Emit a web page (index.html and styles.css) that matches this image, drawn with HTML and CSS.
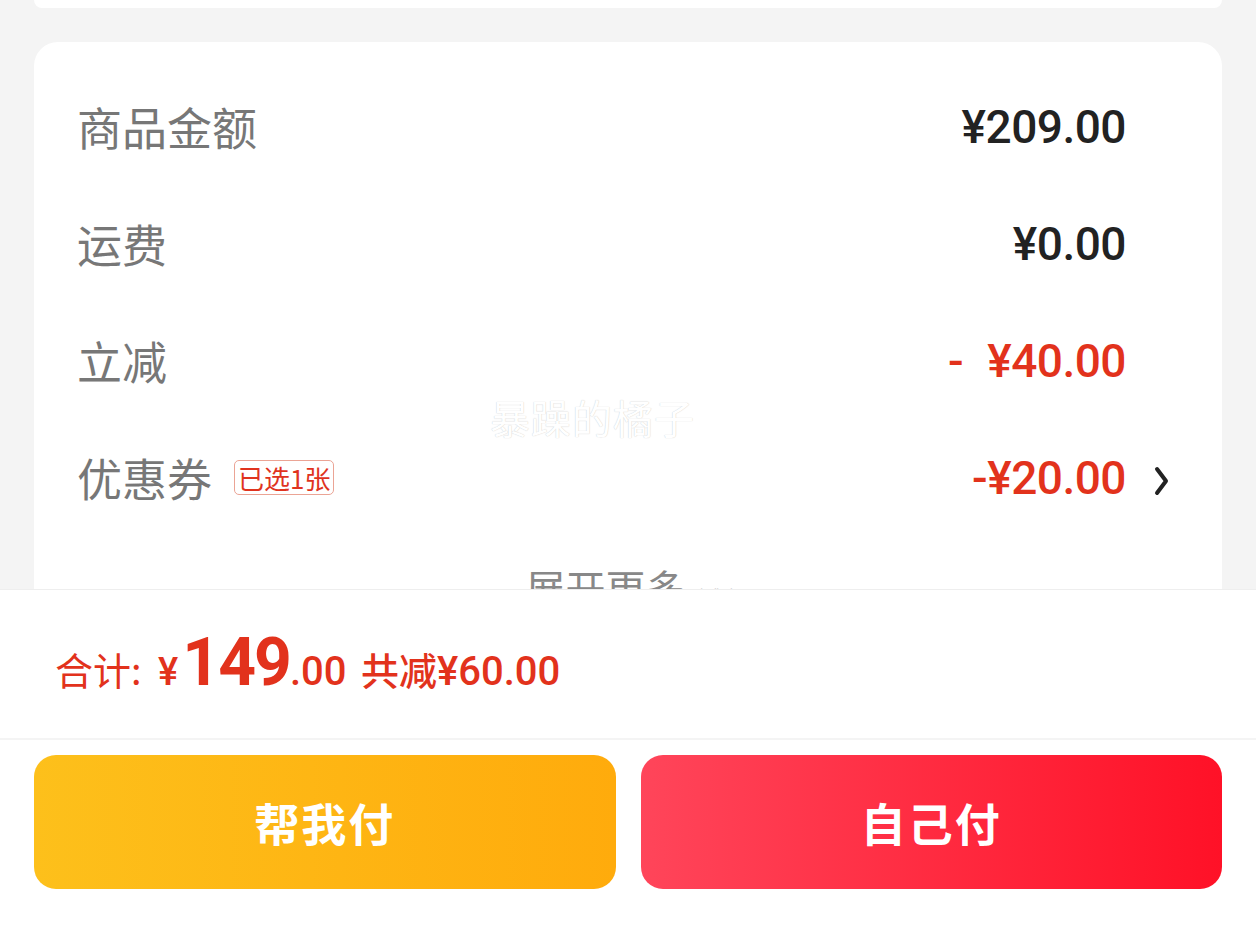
FILE: index.html
```html
<!DOCTYPE html>
<html lang="zh-CN">
<head>
  <meta charset="UTF-8" />
  <meta name="viewport" content="width=device-width, initial-scale=1.0"/>
  <title>确认订单</title>
  <link rel="stylesheet" href="styles.css">
</head>
<body>
  <div class="scroll">
    <div class="card card-top"></div>

    <div class="card">
      <div class="row">
        <span class="label">商品金额</span>
        <span class="value">¥209.00</span>
      </div>
      <div class="row">
        <span class="label">运费</span>
        <span class="value">¥0.00</span>
      </div>
      <div class="row">
        <span class="label">立减</span>
        <span class="value red"><span class="minus">-</span>¥40.00</span>
      </div>
      <div class="row">
        <span class="label">优惠券 <span class="tag">已选1张</span></span>
        <span class="value red">-¥20.00
          <svg class="arrow" width="16" height="30" viewBox="0 0 16 30"><polyline points="3,3 12,15 3,27" fill="none" stroke="#222" stroke-width="4" stroke-linecap="round" stroke-linejoin="round"/></svg>
        </span>
      </div>
      <div class="more">展开更多 <span class="more-icon">∨∨</span></div>
    </div>

    <div class="watermark">暴躁的橘子</div>
  </div>

  <div class="footer">
    <div class="total">
      合计: <span class="yen">¥</span><span class="big">149</span><span class="cents">.00</span>
      <span class="saved">共减<span class="num">¥60.00</span></span>
    </div>
    <div class="actions">
      <button class="btn btn-help">帮我付</button>
      <button class="btn btn-self">自己付</button>
    </div>
  </div>
</body>
</html>
```

FILE: styles.css
```css
body {
  margin: 0;
  background: #f4f4f4;
  font-family: Roboto, "Noto Sans CJK SC", sans-serif;
  height: 931px;
  overflow: hidden;
}

.scroll {
  height: 589px;
  overflow: hidden;
  position: relative;
  padding: 0 34px;
}

.card {
  background: #ffffff;
  border-radius: 24px;
  padding: 26px 43px 0 43px;
}

.card-top {
  height: 8px;
  padding: 0;
  border-radius: 0 0 24px 24px;
  margin-bottom: 34px;
}

.row {
  display: flex;
  justify-content: space-between;
  align-items: center;
  height: 117px;
  padding-right: 53px;
}

.label {
  font-family: "Noto Sans CJK SC", sans-serif;
  font-size: 45px;
  color: #777777;
  display: flex;
  align-items: center;
}

.tag {
  font-size: 26px;
  color: #e0331e;
  border: 1px solid #eba495;
  border-radius: 5px;
  padding: 0 3px;
  line-height: 33px;
  margin-left: 22px;
}

.value {
  font-size: 46px;
  font-weight: 500;
  color: #222222;
  letter-spacing: -0.5px;
  position: relative;
}

.value.red {
  color: #e2321c;
}

.minus {
  margin-right: 24px;
}

.row:last-of-type {
  padding-right: 50px;
}

.arrow {
  position: absolute;
  right: -44px;
  top: 15px;
}

.more {
  text-align: center;
  font-family: "Noto Sans CJK SC", sans-serif;
  font-size: 40px;
  color: #888888;
  padding-top: 22px;
  height: 80px;
}

.more-icon {
  font-size: 20px;
  letter-spacing: -4px;
  margin-left: 4px;
}

.watermark {
  position: absolute;
  left: 490px;
  top: 388px;
  font-family: "Noto Sans CJK SC", sans-serif;
  font-size: 40px;
  color: #ffffff;
  text-shadow: 0 0 1px rgba(0,0,0,0.25);
  letter-spacing: 1px;
}

.footer {
  background: #ffffff;
  border-top: 1px solid #eeeeee;
  height: 341px;
}

.total {
  height: 150px;
  box-sizing: border-box;
  padding: 34px 0 0 55px;
  font-family: "Noto Sans CJK SC", sans-serif;
  font-size: 38px;
  color: #e2321c;
  border-bottom: 2px solid #f4f4f4;
}

.yen {
  margin-left: 8px;
  font-family: Roboto, sans-serif;
  font-size: 38px;
  font-weight: 500;
}

.big {
  font-family: Roboto, sans-serif;
  font-size: 66px;
  font-weight: bold;
  letter-spacing: -2px;
  margin-left: 4px;
}

.cents {
  font-family: Roboto, sans-serif;
  font-size: 40px;
  font-weight: 500;
}

.saved {
  margin-left: 6px;
  font-size: 38px;
  font-weight: 500;
}

.saved .num {
  font-family: Roboto, sans-serif;
  font-size: 40px;
}

.actions {
  display: flex;
  gap: 25px;
  padding: 15px 34px 0;
}

.btn {
  flex: 1;
  height: 134px;
  border: none;
  border-radius: 22px;
  color: #ffffff;
  font-family: "Noto Sans CJK SC", sans-serif;
  font-size: 45px;
  font-weight: bold;
  letter-spacing: 2px;
}

.btn-help {
  background: linear-gradient(90deg, #fdc01b, #ffab0c);
}

.btn-self {
  background: linear-gradient(90deg, #ff455a, #ff1127);
}
```
